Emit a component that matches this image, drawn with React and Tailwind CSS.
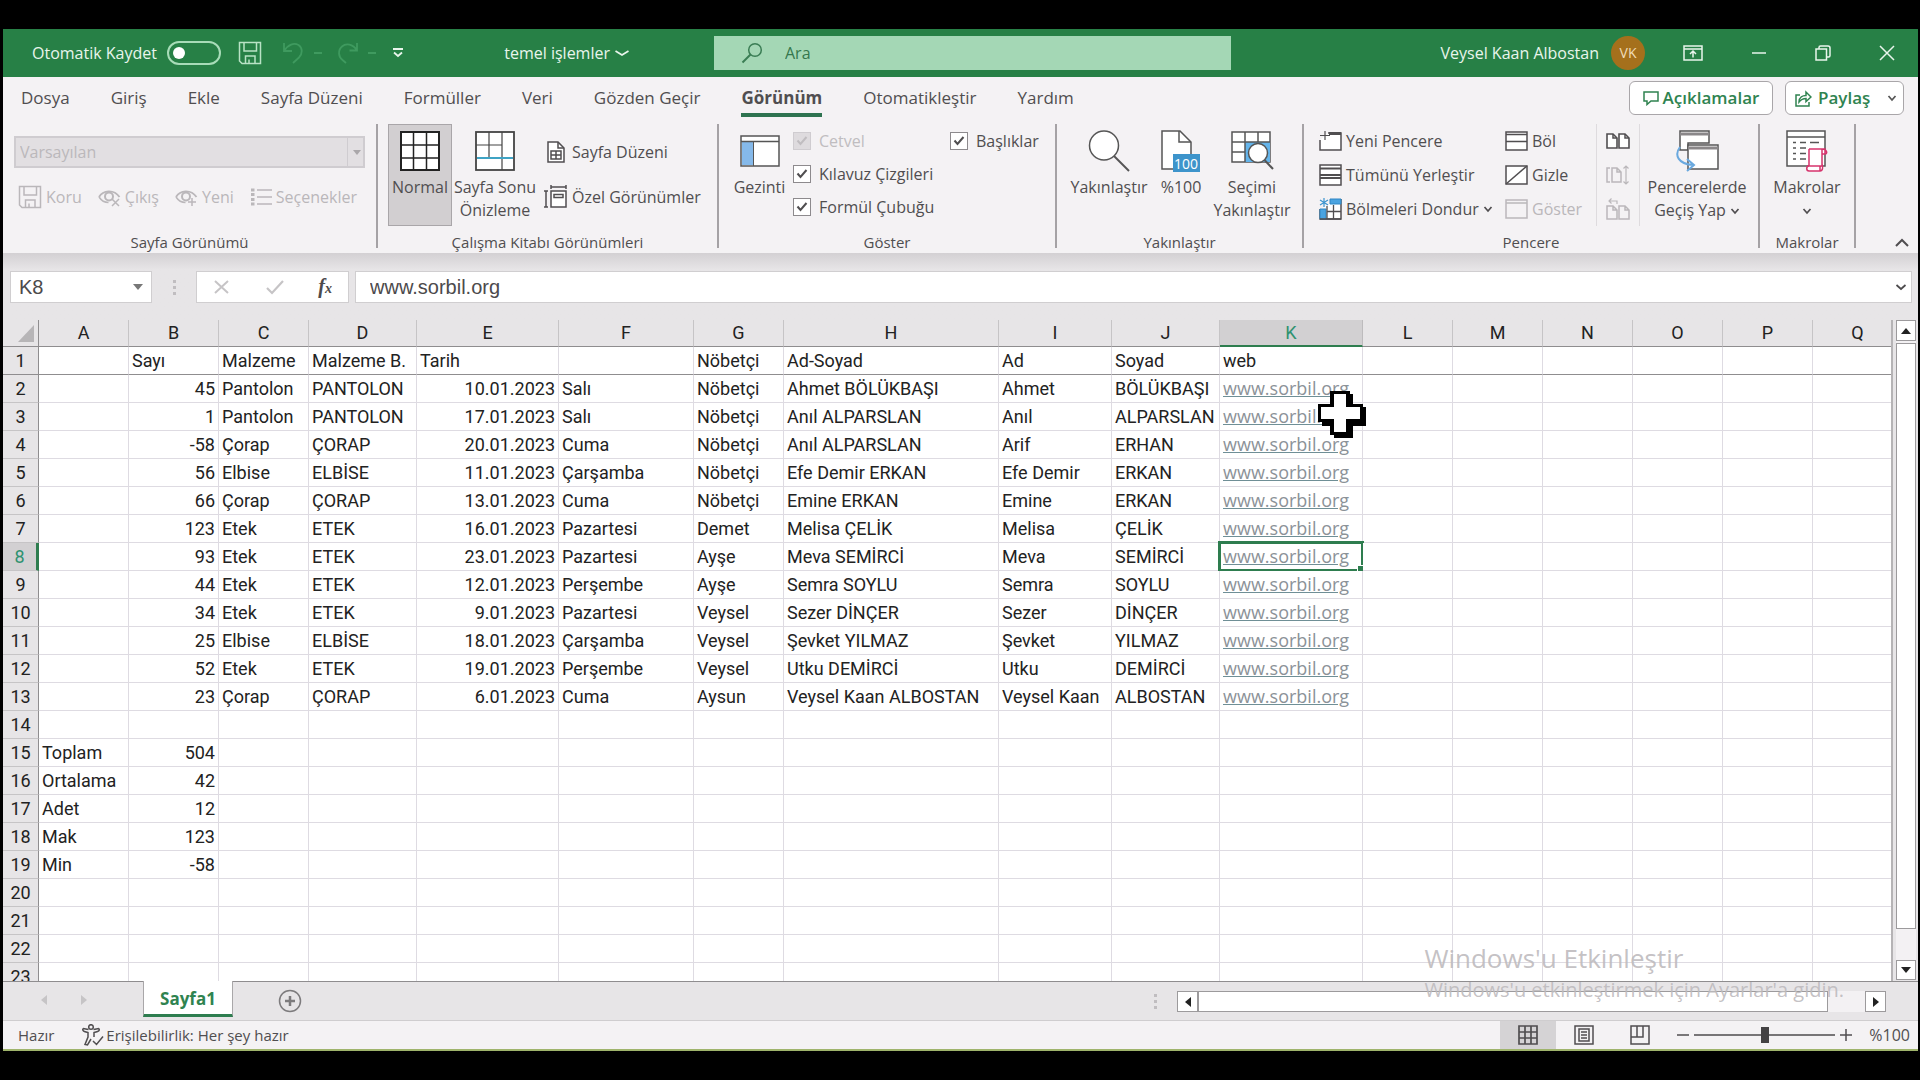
import React, { useState } from "react";

const TABS = [
  "Dosya",
  "Giriş",
  "Ekle",
  "Sayfa Düzeni",
  "Formüller",
  "Veri",
  "Gözden Geçir",
  "Görünüm",
  "Otomatikleştir",
  "Yardım",
];

const COLUMNS = "ABCDEFGHIJKLMNOPQ".split("");

const ROWS = [
  ["", "Sayı", "Malzeme", "Malzeme B.", "Tarih", "", "Nöbetçi", "Ad-Soyad", "Ad", "Soyad", "web"],
  ["", 45, "Pantolon", "PANTOLON", "10.01.2023", "Salı", "Nöbetçi", "Ahmet BÖLÜKBAŞI", "Ahmet", "BÖLÜKBAŞI", "www.sorbil.org"],
  ["", 1, "Pantolon", "PANTOLON", "17.01.2023", "Salı", "Nöbetçi", "Anıl ALPARSLAN", "Anıl", "ALPARSLAN", "www.sorbil.org"],
  ["", -58, "Çorap", "ÇORAP", "20.01.2023", "Cuma", "Nöbetçi", "Anıl ALPARSLAN", "Arif", "ERHAN", "www.sorbil.org"],
  ["", 56, "Elbise", "ELBİSE", "11.01.2023", "Çarşamba", "Nöbetçi", "Efe Demir ERKAN", "Efe Demir", "ERKAN", "www.sorbil.org"],
  ["", 66, "Çorap", "ÇORAP", "13.01.2023", "Cuma", "Nöbetçi", "Emine ERKAN", "Emine", "ERKAN", "www.sorbil.org"],
  ["", 123, "Etek", "ETEK", "16.01.2023", "Pazartesi", "Demet", "Melisa ÇELİK", "Melisa", "ÇELİK", "www.sorbil.org"],
  ["", 93, "Etek", "ETEK", "23.01.2023", "Pazartesi", "Ayşe", "Meva SEMİRCİ", "Meva", "SEMİRCİ", "www.sorbil.org"],
  ["", 44, "Etek", "ETEK", "12.01.2023", "Perşembe", "Ayşe", "Semra SOYLU", "Semra", "SOYLU", "www.sorbil.org"],
  ["", 34, "Etek", "ETEK", "9.01.2023", "Pazartesi", "Veysel", "Sezer DİNÇER", "Sezer", "DİNÇER", "www.sorbil.org"],
  ["", 25, "Elbise", "ELBİSE", "18.01.2023", "Çarşamba", "Veysel", "Şevket YILMAZ", "Şevket", "YILMAZ", "www.sorbil.org"],
  ["", 52, "Etek", "ETEK", "19.01.2023", "Perşembe", "Veysel", "Utku DEMİRCİ", "Utku", "DEMİRCİ", "www.sorbil.org"],
  ["", 23, "Çorap", "ÇORAP", "6.01.2023", "Cuma", "Aysun", "Veysel Kaan ALBOSTAN", "Veysel Kaan", "ALBOSTAN", "www.sorbil.org"],
  [],
  ["Toplam", 504],
  ["Ortalama", 42],
  ["Adet", 12],
  ["Mak", 123],
  ["Min", -58],
  [],
  [],
  [],
  [],
];

/* ---------- icons ---------- */

const Svg = ({ w = 22, h = 22, className = "", children }) => (
  <svg
    width={w}
    height={h}
    viewBox={`0 0 ${w} ${h}`}
    fill="none"
    stroke="currentColor"
    strokeWidth="1.5"
    className={`shrink-0 ${className}`}
    aria-hidden="true"
  >
    {children}
  </svg>
);

const Chevron = ({ w = 10, className = "" }) => (
  <Svg w={w} h={8} className={className}>
    <path d={`M1.5 2 L${w / 2} 6 L${w - 1.5} 2`} strokeWidth="1.7" />
  </Svg>
);

const SaveIcon = ({ className }) => (
  <Svg w={24} h={24} className={className}>
    <path d="M1.5 1.5H22.5V22.5H4L1.5 20Z" />
    <path d="M6 1.5V10H18.5V1.5M7.5 22.5V15H17V22.5M11 22V18.5" />
  </Svg>
);

const UndoIcon = ({ className }) => (
  <Svg w={24} h={24} className={className}>
    <path d="M2 2V10H10M2.5 9.5C6 3.5 12 1.5 16.5 4C21 7 20.5 13 17 16.5L11 22" strokeWidth="1.8" />
  </Svg>
);

const RedoIcon = ({ className }) => (
  <Svg w={24} h={24} className={className}>
    <path d="M21 2V9.500H13.500M20.500 9C17 3 10 2 6 5.500C1.500 9.500 2.500 16 6.500 19L10 22" strokeWidth="1.800" />
  </Svg>
);

const SearchIcon = () => (
  <Svg w={22} h={22} className="text-[#3a7d54]">
    <circle cx="14" cy="8" r="6.300" />
    <path d="M9.500 12.500L1.500 20.500" strokeWidth="2" />
  </Svg>
);

const EyeIcon = ({ plus }) => (
  <Svg w={23} h={20}>
    <path d="M1 10C5 3 16 2 21.500 10" strokeWidth="1.800" />
    <path d="M1 10C3 13 6 15.500 10.500 15.500" />
    <circle cx="11" cy="9.500" r="4" strokeWidth="2" />
    {plus ? <path d="M17 11V19M13 15H21" /> : <path d="M14 12L21 19M21 12L14 19" />}
  </Svg>
);

const OptionsIcon = () => (
  <Svg w={22} h={20}>
    <path d="M7 3H22M7 10H22M7 17H22" />
    <path d="M1 3H4.500M1 7.500H4.500M1 12.500H4.500M1 17H4.500" strokeWidth="3" />
  </Svg>
);

const GridIcon = () => (
  <Svg w={40} h={40} className="text-[#222]">
    <rect x="1" y="1" width="38" height="38" fill="#fff" strokeWidth="2" />
    <path d="M13.500 1V39M26.500 1V39M1 14H39M1 27H39" />
  </Svg>
);

const PageBreakIcon = () => (
  <Svg w={40} h={40} className="text-[#444]">
    <rect x="1" y="1" width="38" height="38" fill="#fff" strokeWidth="1.800" />
    <path d="M14 1V27M27 1V39M1 14H27" strokeWidth="1.200" />
    <path d="M2 27H38" stroke="#3fa3c4" strokeWidth="2" />
  </Svg>
);

const PageLayoutIcon = () => (
  <Svg w={18} h={22}>
    <path d="M1 1H11L17 7V21H1Z" fill="#fff" />
    <path d="M11 1V7H17M4 10H14V18H4ZM9 10V18M4 14H14" />
  </Svg>
);

const CustomViewIcon = () => (
  <Svg w={24} h={24}>
    <rect x="7" y="6" width="15" height="16" fill="#fff" />
    <path d="M10 9.500H19V12.500H10ZM7 2H22M7 0V4M22 0V4M2 6V22M0 6H4M0 22H4" />
  </Svg>
);

const NavIcon = () => (
  <Svg w={40} h={32} className="text-[#555]">
    <rect x="1" y="1" width="38" height="30" fill="#fff" />
    <rect x="2" y="7" width="11" height="23" fill="#85b9ea" stroke="none" />
    <path d="M1 6.500H39" />
    <path d="M13.500 7V31" strokeWidth="1" />
  </Svg>
);

const ZoomIcon = () => (
  <Svg w={42} h={42} className="text-[#555]">
    <circle cx="16" cy="15.500" r="14.500" fill="#fff" />
    <path d="M26 26L41 41" strokeWidth="2" />
  </Svg>
);

const HundredIcon = () => (
  <Svg w={40} h={42} className="text-[#555]">
    <path d="M1 1H19L30 12V39H1Z" fill="#fff" />
    <path d="M18 1V12H30" />
    <rect x="12" y="24" width="27" height="18" fill="#3d94cb" stroke="none" />
    <text x="25" y="39" textAnchor="middle" fill="#fff" stroke="none" className="font-['Open_Sans',sans-serif] text-sm">
      100
    </text>
  </Svg>
);

const ZoomSelectionIcon = () => (
  <Svg w={43} h={40} className="text-[#555]">
    <rect x="1" y="1" width="38" height="30" fill="#fff" />
    <path d="M14 11H39V31H14Z" fill="#64b4ea" stroke="none" />
    <path d="M1 11H39M1 21H14M14 1V31M27 1V11" />
    <circle cx="27" cy="22" r="9.500" fill="#fff" />
    <path d="M33.500 29L42 38" strokeWidth="2" />
  </Svg>
);

const NewWindowIcon = () => (
  <Svg w={23} h={20}>
    <path d="M9 2H22V19H1V9" fill="#fff" />
    <path d="M10 2.500H22" strokeWidth="3" />
    <path d="M6 0V9M1 4.500H11" strokeWidth="1.200" />
  </Svg>
);

const ArrangeIcon = () => (
  <Svg w={23} h={22}>
    <rect x="1" y="1" width="21" height="20" fill="#fff" />
    <path d="M1 4.500H22M1 11H22M1 14H22" strokeWidth="2" />
  </Svg>
);

const FreezeIcon = () => (
  <Svg w={23} h={22}>
    <path d="M1 11V21H22V1" fill="#fff" />
    <path d="M11 1H22V6H11ZM1 11H7V21H1Z" fill="#4aa3e0" stroke="#2f86c4" strokeWidth="1" />
    <path d="M5 0V9M1 2L9 7M9 2L1 7" stroke="#3c94cf" strokeWidth="1.200" />
    <path d="M8 13.500H22M14.500 7V21M8 8V21M1 21H22" strokeWidth="1.300" />
  </Svg>
);

const SplitIcon = () => (
  <Svg w={23} h={20}>
    <rect x="1" y="1" width="21" height="18" fill="#fff" />
    <path d="M1 3.500H22M1 10.500H22" />
  </Svg>
);

const HideIcon = () => (
  <Svg w={23} h={20}>
    <rect x="1" y="1" width="21" height="18" fill="#fff" />
    <path d="M1 19L22 1" />
  </Svg>
);

const UnhideIcon = () => (
  <Svg w={23} h={20}>
    <rect x="1" y="1" width="21" height="18" />
    <path d="M1 4H22" />
  </Svg>
);

const SideBySideIcon = () => (
  <Svg w={24} h={16}>
    <path d="M1 1H7L11 5V15H1ZM13 1H19L23 5V15H13Z" fill="#fff" strokeWidth="1.600" />
    <path d="M7 1V5H11M19 1V5H23" />
  </Svg>
);

const SyncScrollIcon = () => (
  <Svg w={24} h={20}>
    <path d="M4 3H1V17H4M6 3H11L15 7V17H6ZM11 3V7H15" />
    <path d="M20 1V19M17.500 3.500L20 1L22.500 3.500M17.500 16.500L20 19L22.500 16.500" strokeWidth="1.200" />
  </Svg>
);

const ResetWindowIcon = () => (
  <Svg w={24} h={22}>
    <path d="M1 8H7L11 12V21H1ZM13 8H19L23 12V21H13ZM7 8V12H11M19 8V12H23" />
    <path d="M3 3H11V6M5.500 0.500L3 3L5.500 5.500" strokeWidth="1.200" />
  </Svg>
);

const SwitchWindowsIcon = () => (
  <Svg w={44} h={42} className="text-[#555]">
    <path d="M5 1H34V13H13V20H5Z" fill="#fff" />
    <path d="M5 4H34" strokeWidth="3" stroke="#8a8789" />
    <rect x="13" y="15" width="30" height="24" fill="#fff" />
    <path d="M13 18H43" strokeWidth="3" stroke="#8a8789" />
    <path d="M5 17C-1 25 3 34 18 35M12 29L19 35L12 41" stroke="#6aa9df" strokeWidth="2" />
  </Svg>
);

const MacrosIcon = () => (
  <Svg w={42} h={42} className="text-[#555]">
    <rect x="1" y="1" width="38" height="35" fill="#fff" />
    <path d="M1 7H39" />
    <path d="M7 12.500H10M14 12.500H20M24 12.500H33M7 18H10M14 18H20M7 23.500H10M14 23.500H20M7 29H10M14 29H20" />
    <path d="M23 19H39V24M23 19V36H36V19M21 36H34V41H23C20 41 20 36 23 36M36 19C41 19 42 24 39 24H36M34 41C37 41 37 37 36 34" stroke="#d6336c" fill="#fff" />
  </Svg>
);

const A11yIcon = () => (
  <Svg w={22} h={22}>
    <circle cx="9" cy="3" r="2.300" />
    <path d="M1 4.500C0 7 2 7.500 6 8.500V13L3 20.500L5.500 21L9 15M17 4.500C18 7 16 7.500 12 8.500V13M1 4.500L6.500 5.500M17 4.500L11.500 5.500M11 17L14.500 20.500L21 12.500" />
  </Svg>
);

/* ---------- title bar ---------- */

const TitleBar = () => (
  <header className="flex h-12 items-center bg-[#278046] text-[#e9f5ec]">
    <div className="flex w-[711px] shrink-0 items-center pl-[29px]">
      <span className="text-base">Otomatik Kaydet</span>
      <button
        role="switch"
        aria-checked="false"
        aria-label="Otomatik Kaydet"
        className="ml-[10px] flex h-6 w-[54px] items-center rounded-full border-2 border-[#a8dcb8] px-1"
      >
        <span className="h-3 w-3 rounded-full bg-white" />
      </button>
      <button aria-label="Kaydet" className="ml-[17px] text-[#b9e2c5]">
        <SaveIcon />
      </button>
      <button aria-label="Geri al" className="ml-5 flex items-center gap-2 text-[#3f9a5f]">
        <UndoIcon />
        <span className="h-[2px] w-2 bg-current" />
      </button>
      <button aria-label="Yinele" className="ml-[14px] flex items-center gap-2 text-[#3f9a5f]">
        <RedoIcon />
        <span className="h-[2px] w-2 bg-current" />
      </button>
      <button aria-label="Hızlı erişimi özelleştir" className="ml-4">
        <Svg w={12} h={12}>
          <path d="M1 2H11M2 5.500L6 9L10 5.500" strokeWidth="1.800" />
        </Svg>
      </button>
      <button className="mr-[84px] ml-auto flex items-center gap-1 text-base">
        temel işlemler
        <Chevron w={16} />
      </button>
    </div>
    <label className="flex h-[34px] w-[517px] items-center gap-[22px] bg-[#a4d7b5] pl-[27px]">
      <SearchIcon />
      <input
        aria-label="Ara"
        placeholder="Ara"
        className="w-full bg-transparent text-base outline-none placeholder:text-[#35774e]"
      />
    </label>
    <div className="ml-auto flex items-center">
      <span className="text-base">Veysel Kaan Albostan</span>
      <span className="ml-3 flex h-[34px] w-[34px] items-center justify-center rounded-full bg-[#a5701c] text-sm text-[#f0dcb8]">
        VK
      </span>
      <button aria-label="Şerit görüntüleme seçenekleri" className="ml-[38px]">
        <Svg w={20} h={16}>
          <path d="M1 1H19V15H1ZM1 4H19M10 12.500V6.500M7 9L10 6L13 9" />
        </Svg>
      </button>
      <button aria-label="Küçült" className="ml-12">
        <Svg w={16} h={16}>
          <path d="M1 8H15" />
        </Svg>
      </button>
      <button aria-label="Geri yükle" className="ml-12">
        <Svg w={16} h={16}>
          <path d="M1 4H11.500V15H1ZM4 4V2.500Q4 1 5.500 1H13Q15 1 15 3V10.500Q15 12 13.500 12H11.500" />
        </Svg>
      </button>
      <button aria-label="Kapat" className="mr-[23px] ml-12">
        <Svg w={16} h={16}>
          <path d="M1 1L15 15M15 1L1 15" />
        </Svg>
      </button>
    </div>
  </header>
);

const TabBar = () => {
  const [active, setActive] = useState("Görünüm");
  return (
    <nav className="flex h-[46px] items-start pr-[14px] pl-[18px]">
      <div className="flex gap-[41px]">
        {TABS.map((tab) => (
          <button
            key={tab}
            onClick={() => setActive(tab)}
            className={`h-[40px] border-b-4 pt-[6px] text-[17px] whitespace-nowrap ${
              tab === active ? "border-[#2e7350] font-bold" : "border-transparent"
            }`}
          >
            {tab}
          </button>
        ))}
      </div>
      <div className="ml-auto flex gap-3 pt-1 font-semibold text-[#2f8350]">
        <button className="flex h-[34px] w-[144px] items-center justify-center gap-1 rounded-md border border-[#a9a6a9] bg-white text-[17px]">
          <Svg w={16} h={16}>
            <path d="M1 2H15V11H8L4 14.500V11H1Z" />
          </Svg>
          Açıklamalar
        </button>
        <button className="flex h-[34px] w-[119px] items-center gap-[6px] rounded-md border border-[#a9a6a9] bg-white pr-[6px] pl-[9px] text-[17px]">
          <Svg w={17} h={17}>
            <path d="M5 5H1V16H14V12M4 12C4 7 8 5.500 11 5.500V2L16 7L11 11.500V8.500C8 8.500 6 9.500 4 12Z" />
          </Svg>
          Paylaş
          <Chevron className="ml-auto text-[#555]" />
        </button>
      </div>
    </nav>
  );
};

/* ---------- ribbon ---------- */

const Group = ({ label, className, children }) => (
  <section className={`flex shrink-0 flex-col justify-between border-r-2 border-[#a5a2a5] ${className}`}>
    <div className="flex">{children}</div>
    <h2 className="text-center text-[15px] leading-3">{label}</h2>
  </section>
);

const BigButton = ({ icon, children, className = "" }) => (
  <button className={`flex h-[102px] shrink-0 flex-col items-center border border-transparent text-center text-base leading-[23px] ${className}`}>
    <span className="flex h-[51px] items-center">{icon}</span>
    {children}
  </button>
);

const SmallButton = ({ icon, children, disabled, label }) => (
  <button
    disabled={disabled}
    aria-label={label}
    className="flex h-[34px] items-center gap-1 text-base whitespace-nowrap disabled:text-[#bab7ba]"
  >
    {icon}
    {children}
  </button>
);

const Check = ({ label, disabled }) => (
  <label className={`flex h-[33px] items-center gap-2 text-base whitespace-nowrap ${disabled ? "text-[#c0bdc0]" : ""}`}>
    <span className="relative flex h-[18px] w-[18px]">
      <input
        type="checkbox"
        defaultChecked
        disabled={disabled}
        className="peer h-[18px] w-[18px] appearance-none border border-[#8d8a8d] bg-white disabled:border-[#cfccd0] disabled:bg-[#dedbde]"
      />
      <svg viewBox="0 0 18 18" fill="none" className="pointer-events-none absolute inset-0 hidden peer-checked:block">
        <path d="M4.500 8.500L7.500 12L13.500 5" stroke="currentColor" strokeWidth="2" />
      </svg>
    </span>
    {label}
  </label>
);

const Ribbon = () => (
  <div className="flex h-[130px] pt-px pb-[5px]">
    <Group label="Sayfa Görünümü" className="w-[375px]">
      <div className="w-full px-[11px] pt-3">
        <div className="relative">
          <select
            disabled
            aria-label="Sayfa Görünümü"
            className="h-8 w-full appearance-none border-2 border-[#cfccd0] bg-[#e2dfe2] pl-1 text-base text-[#bbb8bb] opacity-100"
          >
            <option>Varsayılan</option>
          </select>
          <span className="pointer-events-none absolute top-0 right-0 flex h-8 w-[18px] items-center justify-center border-l border-[#cfccd0] text-[#aaa7aa]">
            <svg width="8" height="5" viewBox="0 0 8 5" fill="currentColor"><path d="M0 0H8L4 5Z" /></svg>
          </span>
        </div>
        <div className="flex justify-between pt-3 pr-2 pl-1">
          <SmallButton disabled icon={<SaveIcon />}>Koru</SmallButton>
          <SmallButton disabled icon={<EyeIcon />}>Çıkış</SmallButton>
          <SmallButton disabled icon={<EyeIcon plus />}>Yeni</SmallButton>
          <SmallButton disabled icon={<OptionsIcon />}>Seçenekler</SmallButton>
        </div>
      </div>
    </Group>

    <Group label="Çalışma Kitabı Görünümleri" className="w-[341px]">
      <BigButton icon={<GridIcon />} className="ml-[10px] w-[64px] border-[#a9a6a9]! bg-[#d2cfd1]">
        Normal
      </BigButton>
      <BigButton icon={<PageBreakIcon />} className="w-[86px]">
        Sayfa Sonu Önizleme
      </BigButton>
      <div className="flex flex-col gap-[11px] pt-[11px] pl-[6px]">
        <SmallButton icon={<span className="flex w-6 justify-center"><PageLayoutIcon /></span>}>Sayfa Düzeni</SmallButton>
        <SmallButton icon={<CustomViewIcon />}>Özel Görünümler</SmallButton>
      </div>
    </Group>

    <Group label="Göster" className="w-[338px]">
      <BigButton icon={<NavIcon />} className="ml-[7px] w-[67px]">
        Gezinti
      </BigButton>
      <div className="flex w-[157px] flex-col">
        <Check label="Cetvel" disabled />
        <Check label="Kılavuz Çizgileri" />
        <Check label="Formül Çubuğu" />
      </div>
      <div>
        <Check label="Başlıklar" />
      </div>
    </Group>

    <Group label="Yakınlaştır" className="w-[247px]">
      <BigButton icon={<ZoomIcon />} className="ml-2 w-[88px]">
        Yakınlaştır
      </BigButton>
      <BigButton icon={<HundredIcon />} className="w-[56px]">
        %100
      </BigButton>
      <BigButton icon={<ZoomSelectionIcon />} className="w-[86px]">
        Seçimi Yakınlaştır
      </BigButton>
    </Group>

    <Group label="Pencere" className="w-[456px]">
      <div className="flex w-[201px] flex-col pl-[15px]">
        <SmallButton icon={<NewWindowIcon />}>Yeni Pencere</SmallButton>
        <SmallButton icon={<ArrangeIcon />}>Tümünü Yerleştir</SmallButton>
        <SmallButton icon={<FreezeIcon />}>
          Bölmeleri Dondur
          <Chevron />
        </SmallButton>
      </div>
      <div className="flex w-[92px] flex-col border-r border-[#dedbde]">
        <SmallButton icon={<SplitIcon />}>Böl</SmallButton>
        <SmallButton icon={<HideIcon />}>Gizle</SmallButton>
        <SmallButton disabled icon={<UnhideIcon />}>Göster</SmallButton>
      </div>
      <div className="flex w-[43px] flex-col border-r border-[#dedbde] pl-[9px]">
        <SmallButton label="Yan yana görüntüle" icon={<SideBySideIcon />} />
        <SmallButton disabled label="Zaman uyumlu kaydırma" icon={<SyncScrollIcon />} />
        <SmallButton disabled label="Pencere konumunu sıfırla" icon={<ResetWindowIcon />} />
      </div>
      <BigButton icon={<SwitchWindowsIcon />} className="w-[114px]">
        Pencerelerde
        <span className="flex items-center gap-1">
          Geçiş Yap
          <Chevron />
        </span>
      </BigButton>
    </Group>

    <Group label="Makrolar" className="w-[96px]">
      <BigButton icon={<MacrosIcon />} className="w-full">
        Makrolar
        <Chevron className="mt-2" />
      </BigButton>
    </Group>
    <button aria-label="Şeridi daralt" className="mr-2 ml-auto self-end">
      <Svg w={16} h={10}>
        <path d="M2 8L8 2L14 8" strokeWidth="2" />
      </Svg>
    </button>
  </div>
);

/* ---------- formula bar ---------- */

const FormulaBar = ({ cell, value }) => (
  <div className="flex h-[67px] items-start bg-linear-to-b from-[#d3d0d3] via-[#e7e5e7] via-25% to-[#e7e5e7] pt-[18px] pr-[6px] pl-[7px] font-['Liberation_Sans',Arial,sans-serif] text-xl text-[#4c4a4c]">
    <div className="flex h-8 w-[142px] items-center border border-[#d0ced0] bg-white px-2">
      <input aria-label="Ad kutusu" defaultValue={cell} className="w-full min-w-0 outline-none" />
      <svg width="10" height="6" viewBox="0 0 10 6" fill="#777" className="shrink-0"><path d="M0 0H10L5 6Z" /></svg>
    </div>
    <div className="flex h-8 w-[44px] flex-col items-center justify-center gap-[3px]">
      <span className="h-[3px] w-[3px] bg-[#c0bdc0]" />
      <span className="h-[3px] w-[3px] bg-[#c0bdc0]" />
      <span className="h-[3px] w-[3px] bg-[#c0bdc0]" />
    </div>
    <div className="mr-[6px] flex h-8 w-[153px] items-center justify-between border border-[#d0ced0] bg-white px-4">
      <button aria-label="İptal" className="text-[#c6c4c6]">
        <Svg w={18} h={16}><path d="M2 2L15 14M15 2L2 14" strokeWidth="2" /></Svg>
      </button>
      <button aria-label="Gir" className="text-[#c6c4c6]">
        <Svg w={20} h={16}><path d="M2 9L7 14L18 2" strokeWidth="2.200" /></Svg>
      </button>
      <button aria-label="İşlev ekle" className="font-['Liberation_Serif',serif] leading-5 font-bold italic">
        f<span className="text-sm">x</span>
      </button>
    </div>
    <div className="flex h-8 flex-1 items-center border border-[#d0ced0] bg-white pr-1 pl-[14px]">
      <input aria-label="Formül çubuğu" defaultValue={value} className="w-full outline-none" />
      <Chevron w={12} />
    </div>
  </div>
);

/* ---------- sheet ---------- */

const isRight = (row, col) => row > 0 && (col === 1 || col === 4);

const Sheet = () => (
  <div className="min-w-0 flex-1 overflow-hidden border-r-2 border-[#b5b3b5] font-[Roboto,sans-serif] text-lg leading-6 text-[#222]">
    <table className="w-full table-fixed border-separate border-spacing-0">
      <colgroup>
        <col className="w-[36px]" />
        <col className="w-[90px]" />
        <col className="w-[90px]" />
        <col className="w-[90px]" />
        <col className="w-[108px]" />
        <col className="w-[142px]" />
        <col className="w-[135px]" />
        <col className="w-[90px]" />
        <col className="w-[215px]" />
        <col className="w-[113px]" />
        <col className="w-[108px]" />
        <col className="w-[143px]" />
        <col className="w-[90px]" />
        <col className="w-[90px]" />
        <col className="w-[90px]" />
        <col className="w-[90px]" />
        <col className="w-[90px]" />
        <col className="w-[90px]" />
      </colgroup>
      <thead>
        <tr className="bg-[#e7e5e7]">
          <td className="h-[27px] border-r border-b border-[#8f8d8f] p-0">
            <svg width="16" height="17" viewBox="0 0 16 17" fill="#b7b5b7" className="mr-1 ml-auto"><path d="M16 0V17H0Z" /></svg>
          </td>
          {COLUMNS.map((c) => (
            <th
              key={c}
              scope="col"
              className={`h-[27px] border-r p-0 font-normal ${
                c === "K"
                  ? "border-b-2 border-r-[#bdbbbd] border-b-[#2e7d4f] bg-[#d2d0d2] text-[#2f9270]"
                  : "border-b border-r-[#c6c4c6] border-b-[#8f8d8f]"
              }`}
            >
              {c}
            </th>
          ))}
        </tr>
      </thead>
      <tbody>
        {ROWS.map((row, r) => (
          <tr key={r}>
            <th
              scope="row"
              className={`h-[28px] border-b p-0 text-center font-normal ${
                r === 7
                  ? "border-r-[3px] border-r-[#2e7d4f] border-b-[#c6c4c6] bg-[#d2d0d2] text-[#2f9270]"
                  : r === 0
                    ? "border-r border-r-[#8f8d8f] border-b-[#8f8d8f] bg-[#e7e5e7]"
                    : "border-r border-r-[#8f8d8f] border-b-[#c6c4c6] bg-[#e7e5e7]"
              }`}
            >
              {r + 1}
            </th>
            {COLUMNS.map((c, i) => (
              <td
                key={c}
                className={`relative h-[28px] border-r border-b border-r-[#dedbe2] bg-white px-[3px] py-0 whitespace-nowrap ${
                  r === 0 ? "border-b-[#8f8d8f]" : "border-b-[#dedbe2]"
                } ${isRight(r, i) ? "text-right" : ""}`}
              >
                {i === 10 && r > 0 && row[i] ? (
                  <a href="#web" className="font-['Open_Sans',sans-serif] text-[#8b9298] underline decoration-[#6f8f96]">
                    {row[i]}
                  </a>
                ) : (
                  row[i]
                )}
                {r === 7 && c === "K" && (
                  <span className="pointer-events-none absolute -inset-[2px] border-[3px] border-[#2e7d4f]">
                    <span className="absolute -right-[4px] -bottom-[4px] h-[8px] w-[8px] border-t border-l border-white bg-[#2e7d4f]" />
                  </span>
                )}
              </td>
            ))}
          </tr>
        ))}
      </tbody>
    </table>
  </div>
);

const Arrow = ({ d }) => (
  <svg width="12" height="12" viewBox="0 0 12 12" fill="#222"><path d={d} /></svg>
);

const VerticalScroll = () => (
  <div className="flex w-[25px] shrink-0 flex-col bg-[#e7e5e7] pr-[2px] pl-[3px]">
    <button aria-label="Yukarı kaydır" className="flex h-[21px] items-center justify-center border border-[#9c9a9c] bg-white">
      <Arrow d="M1 9H11L6 3Z" />
    </button>
    <div className="flex flex-1 flex-col bg-[#f3f1f3] pt-[2px]">
      <div className="h-[95%] border border-[#9c9a9c] bg-white" />
    </div>
    <button aria-label="Aşağı kaydır" className="mb-px flex h-[20px] items-center justify-center border border-[#9c9a9c] bg-white">
      <Arrow d="M1 3H11L6 9Z" />
    </button>
  </div>
);

const SheetTabs = () => (
  <div className="flex h-[40px] shrink-0 items-start border-t border-b border-t-[#8f8d8f] border-b-[#cfcdcf] bg-[#e7e5e7]">
    <div className="flex w-[140px] items-center gap-7 pt-3 pl-[35px] text-[#c6c4c6]">
      <button aria-label="Önceki sayfa"><svg width="12" height="12" viewBox="0 0 12 12" fill="currentColor"><path d="M9 1V11L3 6Z" /></svg></button>
      <button aria-label="Sonraki sayfa"><svg width="12" height="12" viewBox="0 0 12 12" fill="currentColor"><path d="M3 1V11L9 6Z" /></svg></button>
    </div>
    <button className="-mt-px h-[36px] w-[90px] border-x border-b-[3px] border-x-[#a9a7a9] border-b-[#2e7d4f] bg-white pt-[3px] font-['Open_Sans',sans-serif] text-[17px] font-bold text-[#2f8350]">
      Sayfa1
    </button>
    <button aria-label="Yeni sayfa" className="mt-[7px] ml-[45px] text-[#7d7b7d]">
      <Svg w={24} h={24}>
        <circle cx="12" cy="12" r="10.500" />
        <path d="M12 7V17M7 12H17" strokeWidth="2.500" />
      </Svg>
    </button>
    <div className="mt-[12px] ml-auto flex flex-col gap-[3px]">
      <span className="h-[3px] w-[3px] bg-[#c0bdc0]" />
      <span className="h-[3px] w-[3px] bg-[#c0bdc0]" />
      <span className="h-[3px] w-[3px] bg-[#c0bdc0]" />
    </div>
    <div className="mt-[9px] mr-8 ml-5 flex h-[21px] w-[37%] bg-[#f3f1f3]">
      <button aria-label="Sola kaydır" className="flex w-[21px] items-center justify-center border border-[#9c9a9c] bg-white">
        <Arrow d="M9 1V11L3 6Z" />
      </button>
      <div className="mr-[37px] flex-1 border border-[#9c9a9c] bg-white" />
      <button aria-label="Sağa kaydır" className="flex w-[21px] items-center justify-center border border-[#9c9a9c] bg-white">
        <Arrow d="M3 1V11L9 6Z" />
      </button>
    </div>
  </div>
);

const StatusBar = () => (
  <footer className="flex h-[30px] shrink-0 items-center border-b-2 border-[#9fb46c] bg-[#f4f2f4] pr-2 pl-[15px] text-[15px]">
    <span>Hazır</span>
    <button className="ml-7 flex items-center gap-[2px]">
      <A11yIcon />
      Erişilebilirlik: Her şey hazır
    </button>
    <div className="ml-auto flex h-full items-center">
      <button aria-label="Normal" className="flex h-full w-[56px] items-center justify-center bg-[#d5d3d5]">
        <Svg w={20} h={20}><path d="M1 1H19V19H1ZM7 1V19M13 1V19M1 7H19M1 13H19" strokeWidth="1.700" /></Svg>
      </button>
      <button aria-label="Sayfa Düzeni" className="flex h-full w-[56px] items-center justify-center">
        <Svg w={20} h={20}><path d="M1 1H19V19H1ZM5 4H15V16H5ZM7 7H13M7 10H13M7 13H13" /></Svg>
      </button>
      <button aria-label="Sayfa Sonu Önizleme" className="flex h-full w-[56px] items-center justify-center">
        <Svg w={20} h={20}><path d="M1 1H19V19H1ZM1 12H13V1M7 1V12" /></Svg>
      </button>
      <button aria-label="Uzaklaştır" className="ml-2">
        <Svg w={14} h={14}><path d="M1 7H13" /></Svg>
      </button>
      <input
        type="range"
        aria-label="Yakınlaştırma"
        defaultValue="50"
        className="mx-1 h-5 w-[141px] appearance-none bg-transparent [&::-webkit-slider-runnable-track]:h-[2px] [&::-webkit-slider-runnable-track]:bg-[#777577] [&::-webkit-slider-thumb]:-mt-[7px] [&::-webkit-slider-thumb]:h-4 [&::-webkit-slider-thumb]:w-2 [&::-webkit-slider-thumb]:appearance-none [&::-webkit-slider-thumb]:bg-[#444244]"
      />
      <button aria-label="Yakınlaştır">
        <Svg w={14} h={14}><path d="M1 7H13M7 1V13" /></Svg>
      </button>
      <span className="ml-4 text-base">%100</span>
    </div>
  </footer>
);

const CrossCursor = () => (
  <svg width="50" height="50" viewBox="0 0 50 50" className="pointer-events-none absolute top-[389px] left-[1317px]">
    <path d="M17 5H36V18H49V37H36V49H17V37H5V18H17Z" fill="#000" />
    <path d="M13 2H33V15H46V33H33V46H13V33H1V15H13Z" fill="#000" />
    <path d="M17 5H29V18H43V30H29V43H17V30H4V18H17Z" fill="#fff" />
  </svg>
);

const App = () => {
  return (
    <div className="relative flex h-screen flex-col bg-black pt-[29px] pr-[2px] pb-[29px] pl-[3px]">
      <div className="flex min-h-0 flex-1 flex-col bg-[#f4f2f4] font-['Open_Sans',sans-serif] text-[#504e50]">
        <TitleBar />
        <TabBar />
        <Ribbon />
        <FormulaBar cell="K8" value="www.sorbil.org" />
        <div className="flex min-h-0 flex-1">
          <Sheet />
          <VerticalScroll />
        </div>
        <SheetTabs />
        <StatusBar />
      </div>
      <CrossCursor />
      <div className="pointer-events-none absolute right-[76px] bottom-[76px] font-['Open_Sans',sans-serif] text-[#bdbabd]/90">
        <p className="text-[26px] leading-9">Windows'u Etkinleştir</p>
        <p className="text-xl leading-7">Windows'u etkinleştirmek için Ayarlar'a gidin.</p>
      </div>
    </div>
  );
};

export default App;
